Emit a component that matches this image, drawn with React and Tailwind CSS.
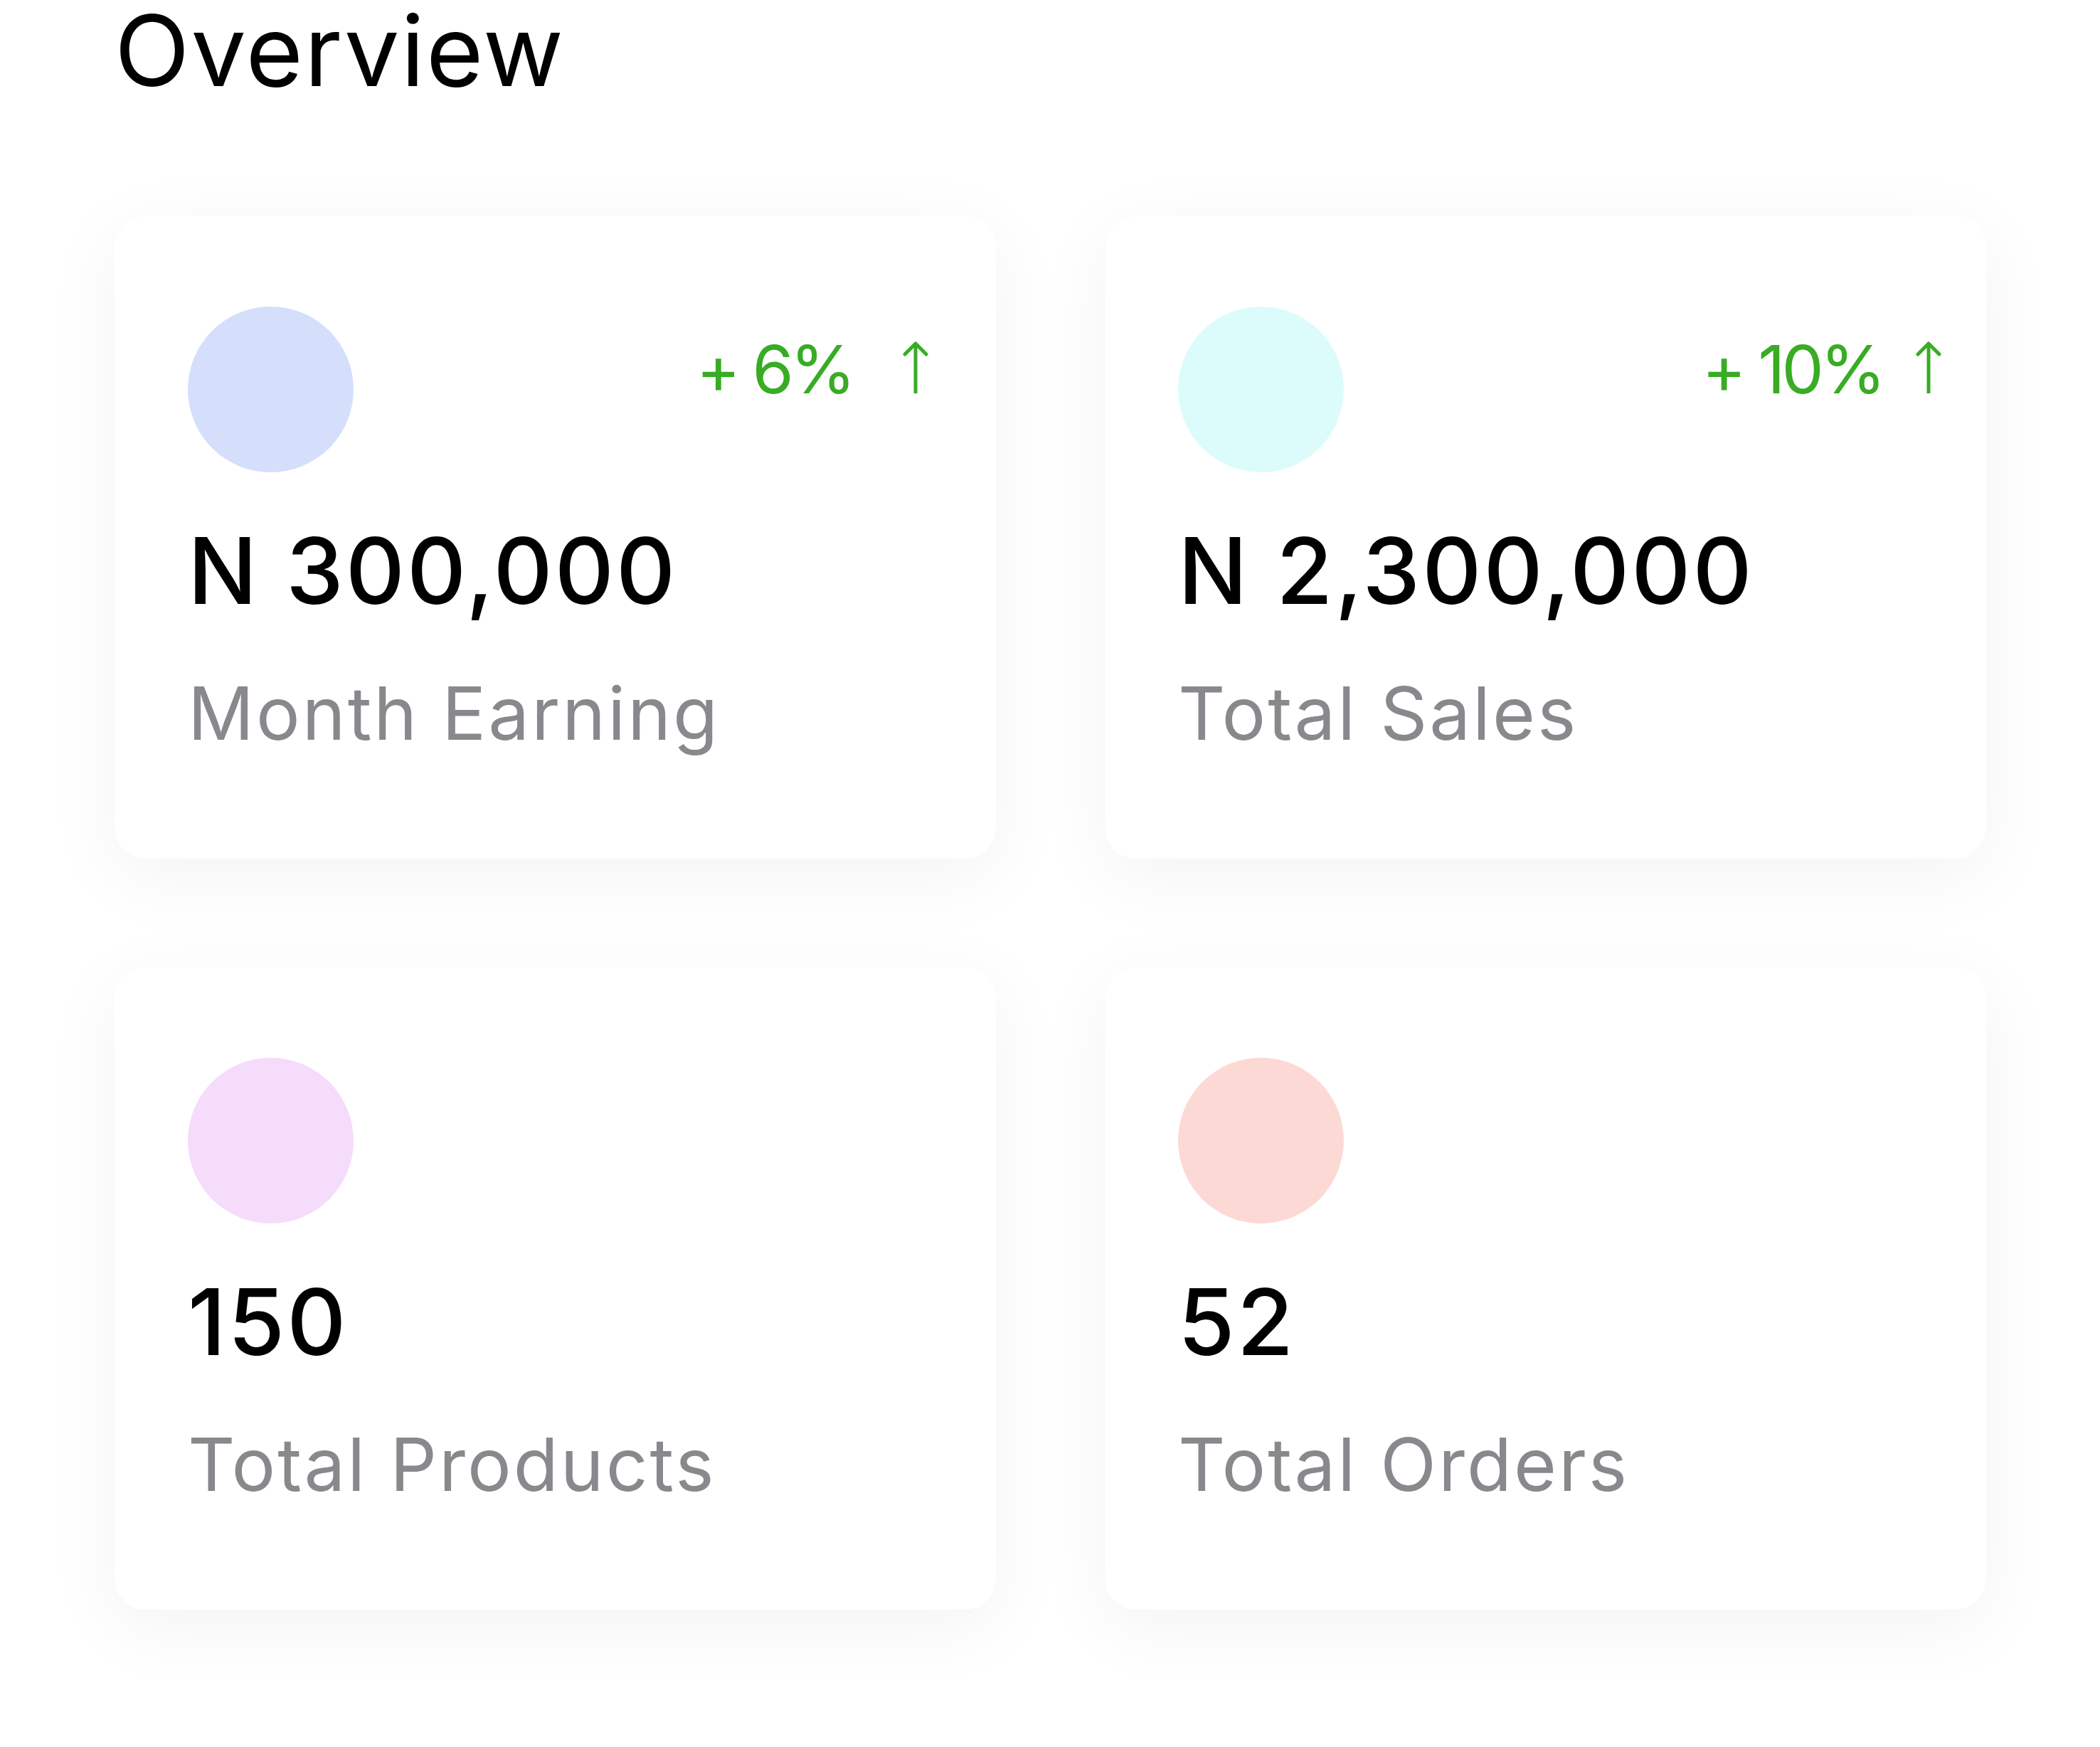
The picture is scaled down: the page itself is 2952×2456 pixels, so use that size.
import React from "react";

const stats = [
  {
    amount: "N 300,000",
    label: "Month Earning",
    dot: "bg-[#d5dffc]",
    trend: "+ 6%",
    trendWrap: "mr-[95px] gap-[71px]",
  },
  {
    amount: "N 2,300,000",
    label: "Total Sales",
    dot: "bg-[#dcfcfb]",
    trend: "+ 10%",
    trendWrap: "mr-[63px] gap-[47px]",
  },
  { amount: "150", label: "Total Products", dot: "bg-[#f5dcfb]" },
  { amount: "52", label: "Total Orders", dot: "bg-[#fdd9d6]" },
];

const ArrowUp = () => (
  <svg width="36" height="76" viewBox="0 0 36 76" fill="none" stroke="#38ac24" strokeWidth="5">
    <path d="M18 6 L18 76" />
    <path d="M3 21 L18 6 L33 21" strokeLinecap="round" strokeLinejoin="round" />
  </svg>
);

const StatCard = ({ amount, label, dot, trend, trendWrap }) => {
  return (
    <div className="bg-white rounded-[44px] shadow-[0_24px_110px_rgba(0,0,0,0.05)] pl-[103px] pt-[127px] pb-[153px]">
      <div className="flex justify-between items-start">
        <div className={`w-[233px] h-[233px] rounded-full ${dot}`} />
        {trend && (
          <div className={`flex items-baseline mt-[41px] ${trendWrap}`}>
            <span className="text-[94px] leading-none tracking-[-5px] text-[#38ac24]">{trend}</span>
            <ArrowUp />
          </div>
        )}
      </div>
      <div className="mt-[74px] text-[129px] leading-none tracking-[3px] font-medium text-black">
        {amount}
      </div>
      <div className="mt-[84px] text-[103px] leading-none tracking-[3px] text-[#89888d]">{label}</div>
    </div>
  );
};

export default function App() {
  return (
    <div
      className="bg-white min-h-screen pl-[161px] pr-[160px] pt-[2px]"
      style={{ fontFamily: "Inter, 'Noto Sans', sans-serif" }}
    >
      <h1 className="text-[138px] leading-none tracking-[2px] font-normal text-black">Overview</h1>

      {/* cards */}
      <div className="grid grid-cols-2 gap-[153px] mt-[164px]">
        {stats.map((s, i) => (
          <StatCard key={i} {...s} />
        ))}
      </div>
    </div>
  );
}
